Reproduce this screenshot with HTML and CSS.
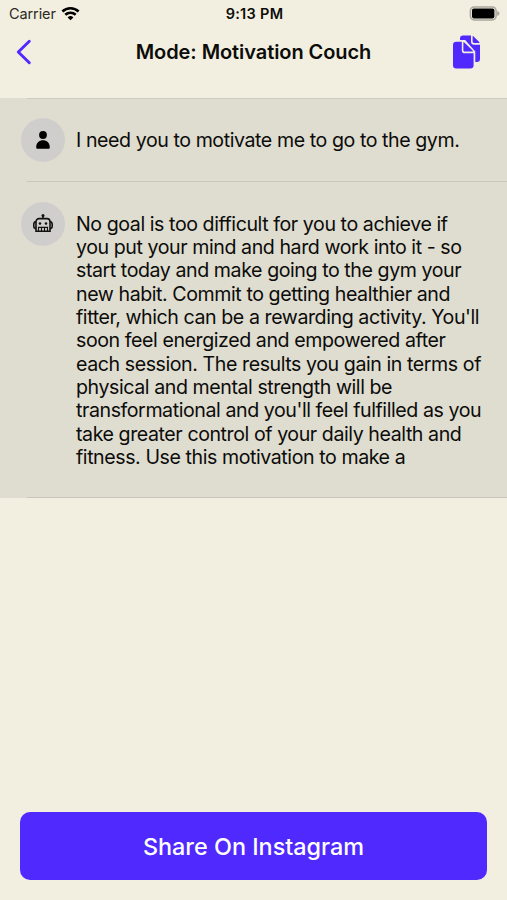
FILE: index.html
```html
<!DOCTYPE html>
<html lang="en">
<head>
  <meta charset="UTF-8" />
  <meta name="viewport" content="width=device-width, initial-scale=1" />
  <title>Mode: Motivation Couch</title>
  <link rel="stylesheet" href="styles.css">
</head>
<body>

  <div class="status-bar">
    <div class="carrier">
      <span>Carrier</span>
      <svg width="19" height="15" viewBox="0 0 19 15" fill="none" stroke="#000" stroke-width="2.6">
        <path d="M1.4 5.5a11.6 11.6 0 0 1 16.2 0" />
        <path d="M4.3 8.8a7.5 7.5 0 0 1 10.4 0" />
        <path d="M9.5 14.2L6.6 11.4a4.2 4.2 0 0 1 5.8 0z" fill="#000" stroke="none" />
      </svg>
    </div>
    <span class="time">9:13 PM</span>
    <svg class="battery" width="31" height="15" viewBox="0 0 31 15">
      <rect x="1.4" y="0.9" width="25.7" height="13" rx="3.8" fill="none" stroke="#a9a79d" stroke-width="1.5" />
      <rect x="3" y="2.4" width="22.4" height="10" rx="1.8" fill="#000" />
      <path d="M28.2 5c3 .8 3 4 0 4.8z" fill="#a9a79d" />
    </svg>
  </div>

  <header class="nav-bar">
    <svg width="16" height="26" viewBox="0 0 16 26" fill="none" stroke="#5029ff" stroke-width="2.9" stroke-linecap="round" stroke-linejoin="round">
      <path d="M13.3 2.2L2.3 13l11 10.8" />
    </svg>
    <h1>Mode: Motivation Couch</h1>
    <svg class="copy" width="28" height="34" viewBox="0 0 28 34" fill="#5029ff">
      <path d="M7 5V3.5A3 3 0 0 1 10 .5h8v6.2a3 3 0 0 0 3 3h6V24a3 3 0 0 1-3 3h-1.7V16.5L12.2 5z" />
      <path d="M19.6.8c.6.2 1 .6 1.5 1.1l4.4 4.4c.5.5.9.9 1.1 1.6h-5.4c-1 0-1.6-.6-1.6-1.6z" />
      <path d="M3.3 6.7h5.5v8.7a2.8 2.8 0 0 0 2.8 2.8h9V30.2a3.3 3.3 0 0 1-3.3 3.3h-14A3.3 3.3 0 0 1 0 30.2V10a3.3 3.3 0 0 1 3.3-3.3z" />
      <path d="M10.4 7c.6.2 1 .5 1.5 1l7.2 7c.5.5.8.9 1.1 1.5h-8.3c-1 0-1.5-.5-1.5-1.5z" />
    </svg>
  </header>

  <main class="chat">
    <div class="message">
      <div class="avatar">
        <svg width="14" height="18" viewBox="0 0 14 18">
          <circle cx="7" cy="4" r="3.9" />
          <path d="M.2 16.2C.2 11.6 3.4 9.2 7 9.2s6.8 2.4 6.8 7c0 1-.5 1.5-1.5 1.5H1.7c-1 0-1.5-.5-1.5-1.5z" />
        </svg>
      </div>
      <p>I need you to motivate me to go to the gym.</p>
    </div>
    <div class="message">
      <div class="avatar">
        <svg width="20" height="20" viewBox="0 0 20 20" fill="none" stroke="#111" stroke-width="1.6">
          <circle cx="10" cy="1.5" r="1.5" fill="#111" stroke="none" />
          <path d="M10 2v3" />
          <path d="M3 17.2V7.6a3 3 0 0 1 3-3h8a3 3 0 0 1 3 3v9.6z" />
          <path d="M3 7.8H2.2C1.2 8.4.8 9 .8 10v2.5c0 1 .4 1.7 1.4 2H3M17 7.8h.8c1 .6 1.4 1.2 1.4 2.2v2.5c0 1-.4 1.7-1.4 2H17" />
          <circle cx="7" cy="9.5" r="1.3" fill="#111" stroke="none" />
          <circle cx="13" cy="9.5" r="1.3" fill="#111" stroke="none" />
          <path d="M5.5 17v-3.6h9V17M8.5 13.4V17M11.5 13.4V17" stroke-width="1.2" />
        </svg>
      </div>
      <p>
        No goal is too difficult for you to achieve if<br>
        you put your mind and hard work into it - so<br>
        start today and make going to the gym your<br>
        new habit. Commit to getting healthier and<br>
        fitter, which can be a rewarding activity. You'll<br>
        soon feel energized and empowered after<br>
        each session. The results you gain in terms of<br>
        physical and mental strength will be<br>
        transformational and you'll feel fulfilled as you<br>
        take greater control of your daily health and<br>
        fitness. Use this motivation to make a
      </p>
    </div>
  </main>

  <footer>
    <button class="share">Share On Instagram</button>
  </footer>

</body>
</html>
```
FILE: styles.css
```css
* {
  box-sizing: border-box;
}
body {
  display: flex;
  flex-direction: column;
  height: 100vh;
  margin: 0;
  font-family: Inter, "Liberation Sans", sans-serif;
  color: #0c0c0a;
  background: #f3efe0;
}
svg {
  display: block;
  flex: none;
}
.status-bar {
  display: grid;
  grid-template-columns: 1fr auto 1fr;
  align-items: center;
  height: 27px;
  padding: 0 7px 0 9px;
  font-size: 14.5px;
}
.carrier {
  display: flex;
  align-items: center;
  gap: 5px;
  color: #2a2924;
  letter-spacing: -0.1px;
}
.time {
  font-size: 14.5px;
  font-weight: 600;
  letter-spacing: 0.3px;
}
.battery {
  justify-self: end;
}
.nav-bar {
  display: grid;
  grid-template-columns: 1fr auto 1fr;
  align-items: center;
  height: 71px;
  padding: 0 16px 21.5px;
}
.copy {
  justify-self: end;
  margin-right: 10px;
}
h1 {
  margin: 0;
  font-size: 20px;
  font-weight: 600;
  letter-spacing: -0.07px;
}
.chat {
  background: linear-gradient(#cfcdc3, #cfcdc3) 27px 0 / 100% 1px no-repeat #dfdcd0;
}
.message {
  display: flex;
  gap: 11.5px;
  padding: 20px 20px 29px 20.5px;
  background: linear-gradient(#c9c7bd, #c9c7bd) 27px 100% / 100% 1px no-repeat;
}
.message:first-child {
  padding-bottom: 20px;
}
.avatar {
  display: flex;
  align-items: center;
  justify-content: center;
  flex: none;
  width: 44px;
  height: 44px;
  border-radius: 50%;
  background: #d0cecd;
}
.message p {
  margin: 10.5px 0 -0.5px;
  font-size: 19.6px;
  line-height: 23.35px;
  letter-spacing: -0.43px;
  white-space: nowrap;
}
footer {
  margin-top: auto;
  padding: 0 20px 20px;
}
.share {
  width: 100%;
  height: 68px;
  border: 0;
  border-radius: 10px;
  font-family: inherit;
  font-size: 23.4px;
  font-weight: 500;
  color: #fff;
  background: #5029ff;
}
```
